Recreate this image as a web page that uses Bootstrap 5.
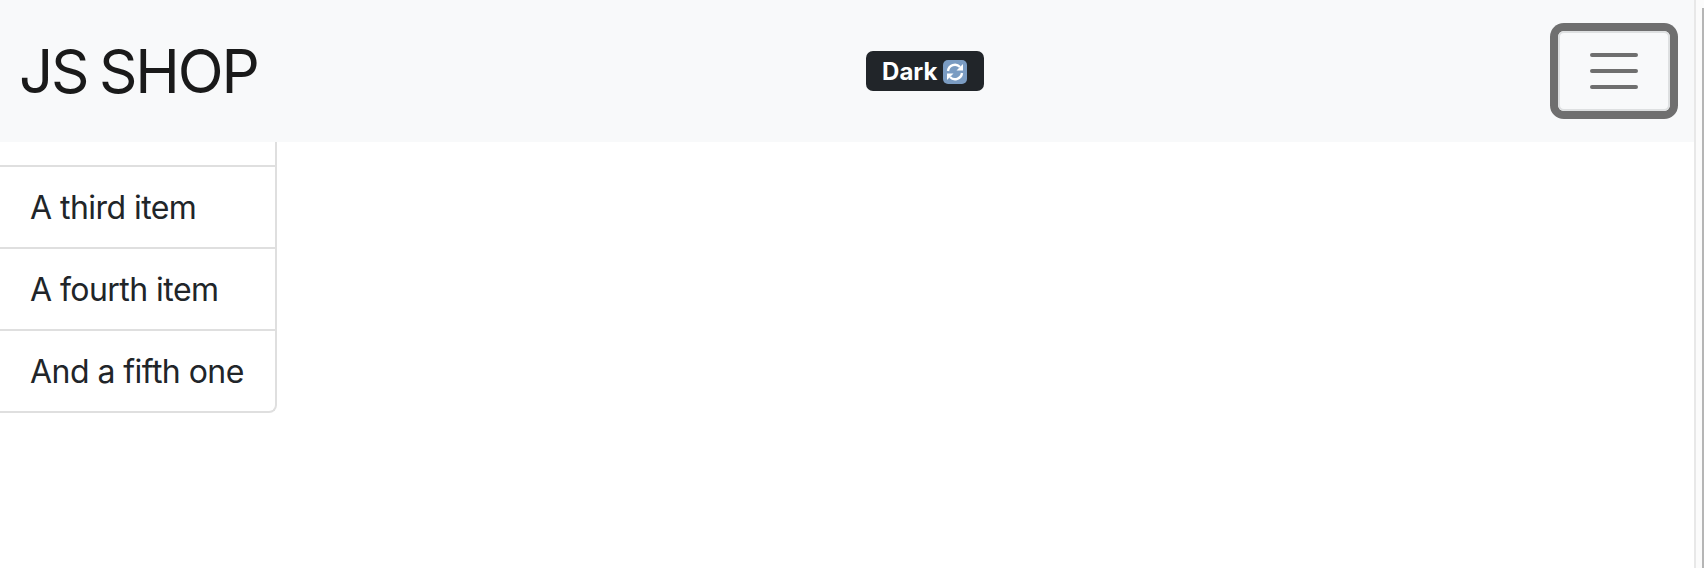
<!DOCTYPE html>
<html lang="en">
<head>
<meta charset="utf-8">
<title>JS SHOP</title>
<link href="https://cdn.jsdelivr.net/npm/bootstrap@5.3.0/dist/css/bootstrap.min.css" rel="stylesheet">
<style>
html, body { height: 100%; overflow: hidden; }
body { font-family: Inter, "Liberation Sans", sans-serif; background: #fff; color: #212529; }
.page-frame { height: 568px; }
.page-main { width: 1694px; }
.page-rail { width: 10px; background: #fbfbfb; border-left: 2px solid #e8e8e8; padding-top: 8px; }
.rail-thumb { width: 2px; height: 100%; margin-left: auto; background: #b5b5b5; }
.shop-bar { height: 142px; padding: 0 24px 0 19px; background: #f8f9fa; }
.shop-brand { font-size: 60px; line-height: 1; letter-spacing: -2.2px; word-spacing: -3px; color: #1a1a1a; font-weight: 400; margin: 0 34px 0 0; padding: 0; }
.mode-pill { width: 118px; height: 40px; font-size: 24px; font-weight: 700; border-radius: 7px; background: #212529; color: #fff; line-height: 1; gap: 6px; padding-top: 1px; }
.mode-glyph { width: 24px; height: 24px; }
.menu-toggle { width: 112px; height: 80px; border: 2px solid #dee0e1; border-radius: 6px; background: transparent; padding: 0; box-shadow: 0 0 0 8px #6f6f6f; }
.menu-lines { width: 48px; height: 36px; }
.shop-list { width: 277px; font-size: 32px; letter-spacing: -0.55px; }
.shop-list .list-group-item { height: 82px; padding: 17px 30px 15px; line-height: 48px; white-space: nowrap; color: #212529; border-color: #dfdfdf; border-width: 2px; border-left: 0; margin: 0; border-radius: 0; }
.shop-list .list-group-item + .list-group-item { border-top-width: 0; }
.shop-list .item-cut { height: 25px; padding: 0; border-top: 0; }
.shop-list .list-group-item:last-child { border-bottom-right-radius: 8px; }
</style>
</head>
<body>
<div class="page-frame d-flex">
  <div class="page-main">
    <nav class="shop-bar d-flex align-items-center justify-content-between">
      <a class="shop-brand text-decoration-none" href="#">JS SHOP</a>
      <span class="mode-pill d-inline-flex align-items-center justify-content-center">Dark
        <svg class="mode-glyph" viewBox="0 0 24 24" aria-hidden="true">
          <rect width="24" height="24" rx="5" fill="#7b9cc2"/>
          <path d="M5 11a7 7 0 0 1 12-4" fill="none" stroke="#fff" stroke-width="2.400"/>
          <path d="M20 4v6.500h-6.500z" fill="#fff"/>
          <path d="M19 13a7 7 0 0 1-12 4" fill="none" stroke="#fff" stroke-width="2.400"/>
          <path d="M4 20v-6.500h6.500z" fill="#fff"/>
        </svg>
      </span>
      <button class="menu-toggle d-flex align-items-center justify-content-center" type="button" aria-label="Toggle navigation">
        <svg class="menu-lines" viewBox="0 0 48 36" aria-hidden="true">
          <path d="M2 2H46M2 18H46M2 34H46" stroke="#6f6f6f" stroke-width="4" stroke-linecap="round"/>
        </svg>
      </button>
    </nav>
    <ul class="list-group shop-list">
      <li class="list-group-item item-cut"></li>
      <li class="list-group-item">A third item</li>
      <li class="list-group-item">A fourth item</li>
      <li class="list-group-item">And a fifth one</li>
    </ul>
  </div>
  <div class="page-rail"><div class="rail-thumb"></div></div>
</div>
<script src="https://cdn.jsdelivr.net/npm/bootstrap@5.3.0/dist/js/bootstrap.bundle.min.js"></script>
</body>
</html>
